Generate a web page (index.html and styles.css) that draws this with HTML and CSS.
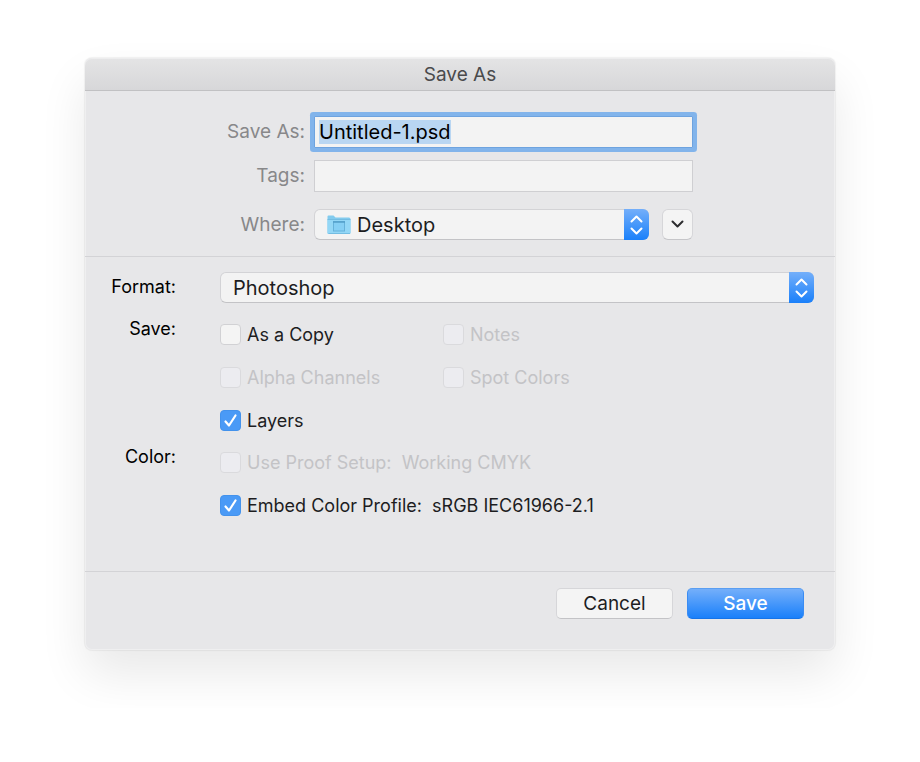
FILE: index.html
```html
<!DOCTYPE html>
<html lang="en">
<head>
    <meta charset="UTF-8">
    <meta name="viewport" content="width=device-width, initial-scale=1.0">
    <title>Save As</title>
    <link rel="stylesheet" href="styles.css">
</head>
<body>
    <form class="dialog" id="saveForm">
        <h1 class="title-bar">Save As</h1>

        <div class="file-section">
            <label class="file-label" for="fileName">Save As:</label>
            <input type="text" class="text-field" id="fileName" value="Untitled-1.psd" autocomplete="off" spellcheck="false" autofocus>

            <label class="file-label" for="tags">Tags:</label>
            <input type="text" class="text-field" id="tags">

            <label class="file-label where" for="where">Where:</label>
            <div class="where-row where">
                <div class="popup has-icon">
                    <select id="where">
                        <option>Desktop</option>
                    </select>
                    <svg class="folder" width="24" height="20" viewBox="0 0 24 20" aria-hidden="true">
                        <path d="M.5 3V1.500Q.5 .5 1.500 .5H6.500L8.500 2.500H22Q23.500 2.500 23.500 4V17.500Q23.500 19 22 19H2Q.5 19 .5 18Z" fill="#82cbee"/>
                        <path d="M.5 5H23.500V17.500Q23.500 19 22 19H2Q.5 19 .5 18Z" fill="#93d7f6"/>
                        <path d="M.5 4.500H23.500M1.500 18.500H23" stroke="#74bde2" fill="none"/>
                        <rect x="6.500" y="6.500" width="11" height="9.500" fill="#85cff4" stroke="#66b2da"/>
                        <path d="M6 7H18" stroke="#539fca" stroke-width="1.500"/>
                    </svg>
                    <span class="arrows">
                        <svg width="13" height="20" viewBox="0 0 13 20" aria-hidden="true"><path d="M1.500 6.500L6.500 1.500L11.500 6.500M1.500 13.500L6.500 18.500L11.500 13.500"/></svg>
                    </span>
                </div>
                <button type="button" class="expand" aria-label="Show more locations">
                    <svg width="13" height="9" viewBox="0 0 13 9" aria-hidden="true"><path d="M1.500 1.500L6.500 6.500L11.500 1.500"/></svg>
                </button>
            </div>
        </div>

        <div class="options-section">
            <div class="option-row">
                <label class="option-label format-label" for="format">Format:</label>
                <div class="popup">
                    <select id="format">
                        <option>Photoshop</option>
                    </select>
                    <span class="arrows">
                        <svg width="13" height="20" viewBox="0 0 13 20" aria-hidden="true"><path d="M1.500 6.500L6.500 1.500L11.500 6.500M1.500 13.500L6.500 18.500L11.500 13.500"/></svg>
                    </span>
                </div>
            </div>

            <div class="option-row" role="group" aria-labelledby="saveLabel">
                <span class="option-label" id="saveLabel">Save:</span>
                <div class="checks">
                    <label class="check"><input type="checkbox">As a Copy</label>
                    <label class="check disabled"><input type="checkbox" disabled>Notes</label>
                    <label class="check disabled"><input type="checkbox" disabled>Alpha Channels</label>
                    <label class="check disabled"><input type="checkbox" disabled>Spot Colors</label>
                    <label class="check wide"><input type="checkbox" checked>Layers</label>
                </div>
            </div>

            <div class="option-row" role="group" aria-labelledby="colorLabel">
                <span class="option-label" id="colorLabel">Color:</span>
                <div class="checks">
                    <label class="check wide disabled"><input type="checkbox" disabled>Use Proof Setup:&nbsp; Working CMYK</label>
                    <label class="check wide"><input type="checkbox" checked>Embed Color Profile:&nbsp; sRGB IEC61966-2.1</label>
                </div>
            </div>
        </div>

        <div class="footer">
            <button type="button" class="btn">Cancel</button>
            <button type="submit" class="btn primary">Save</button>
        </div>
    </form>
    <script>
        // Start with the file name selected, ready to be typed over
        const fileName = document.getElementById("fileName");
        fileName.focus();
        fileName.select();

        document.getElementById("saveForm").addEventListener("submit", (e) => {
            e.preventDefault();
        });
    </script>
</body>
</html>
```

FILE: styles.css
```css
* { margin: 0; padding: 0; box-sizing: border-box; }
body { font-family: Inter, "Liberation Sans", sans-serif; font-size: 18px; line-height: 22px; color: #1d1d1f; background: #fff; padding: 58px 85px; }
input, select, button { font: inherit; color: inherit; }

.dialog { background: #e7e7e9; border-radius: 7px; box-shadow: 0 0 1px 1px rgba(0, 0, 0, 0.05), inset 0 0 0 1px rgba(255, 255, 255, 0.35), 0 24px 48px rgba(0, 0, 0, 0.09); }
.title-bar { height: 33px; padding-top: 6px; font-size: 19px; font-weight: 400; text-align: center; color: #4a4a4c; background: linear-gradient(#e4e4e5, #d7d7d9); border-bottom: 1px solid #c1c1c3; border-radius: 7px 7px 0 0; box-shadow: inset 0 1px 0 #ededee; }

/* File name, tags and location */
.file-section { display: grid; grid-template-columns: 220px 1fr; column-gap: 9px; row-gap: 12px; align-items: center; padding: 25px 142px 16px 0; }
.file-label { font-size: 19px; text-align: right; color: #88888a; }
.text-field { width: 100%; height: 32px; padding: 0 4px; font-size: 20px; color: #000; background: #f3f3f3; border: 1px solid #cfcfd2; outline: none; }
.text-field:focus { border-color: #6ea3df; box-shadow: 0 0 0 4px #82b4eb; border-radius: 1px; }
.text-field::selection { color: #000; background: #b9d6f2; }
.where { margin-top: 5px; }
.where-row { display: flex; gap: 13px; }

/* Pop-up menus */
.popup { position: relative; flex-grow: 1; height: 31px; }
.popup select { appearance: none; width: 100%; height: 100%; padding: 0 34px 0 12px; font-size: 20px; background: #f3f3f3; border: 1px solid #d3d3d6; border-bottom-color: #c3c3c6; border-radius: 6px; outline: none; }
.has-icon select { padding-left: 42px; }
.folder { position: absolute; left: 13px; top: 6px; pointer-events: none; }
.arrows { position: absolute; top: 0; right: 0; bottom: 0; width: 25px; display: flex; align-items: center; justify-content: center; background: linear-gradient(#74affa, #1a80fa); border-radius: 0 6px 6px 0; pointer-events: none; }
.arrows path, .expand path { fill: none; stroke: #fff; stroke-width: 2; stroke-linecap: round; stroke-linejoin: round; }
.expand { width: 31px; height: 31px; display: flex; align-items: center; justify-content: center; background: #f4f4f4; border: 1px solid #d6d6d9; border-bottom-color: #c6c6c9; border-radius: 6px; }
.expand path { stroke: #2d2d2f; }

/* Format and save options */
.options-section { padding: 15px 21px 55px 0; border-top: 1px solid #d3d3d6; display: flex; flex-direction: column; gap: 21px; }
.option-row { display: grid; grid-template-columns: 91px 1fr; column-gap: 44px; }
.option-label { margin-top: -6px; height: 22px; text-align: right; color: #000; }
.format-label { margin-top: 4px; }
.checks { display: grid; grid-template-columns: 223px 1fr; row-gap: 22px; }
.check { display: flex; align-items: center; gap: 6px; height: 21px; white-space: nowrap; }
.check.wide { grid-column: 1 / -1; }
.check.disabled { color: #c3c3c6; }
.check input { appearance: none; flex-shrink: 0; width: 21px; height: 21px; background: #f4f4f4; border: 1px solid #d1d1d4; border-radius: 4px; }
.check input:disabled { background: #ececf0; border-color: #dadadd; }
.check input:checked { background: #4a9af6 url("data:image/svg+xml,%3Csvg xmlns='http://www.w3.org/2000/svg' viewBox='0 0 21 21'%3E%3Cpath d='M5.500 11.500L9 15.500L15.500 5.500' fill='none' stroke='%23fff' stroke-width='2.200' stroke-linecap='round' stroke-linejoin='round'/%3E%3C/svg%3E") center / 21px 21px no-repeat; border-color: #4392ec; }

.footer { display: flex; justify-content: flex-end; gap: 14px; padding: 16px 31px 31px; border-top: 1px solid #d3d3d6; }
.btn { width: 117px; height: 31px; font-size: 19px; background: #f4f4f4; border: 1px solid #d6d6d9; border-bottom-color: #c3c3c6; border-radius: 5px; }
.btn.primary { color: #fff; background: linear-gradient(#74affa, #1a80fa); border-color: #5a9ef2 #3a8cf3 #1674e8; font-weight: 500; }
```
